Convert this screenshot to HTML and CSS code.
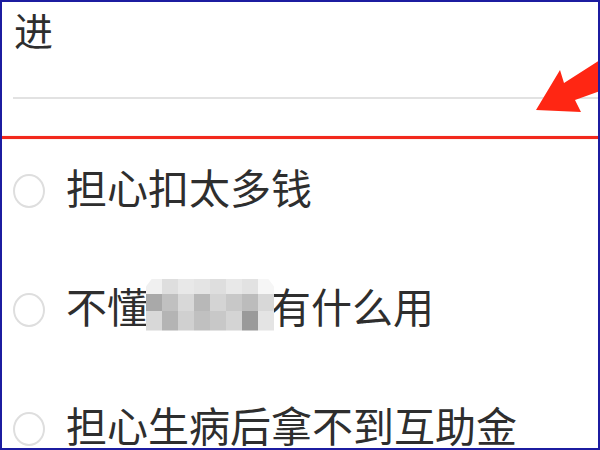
FILE: index.html
```html
<!DOCTYPE html>
<html lang="zh-CN">
<head>
<meta charset="utf-8">
<title>问卷</title>
<link rel="stylesheet" href="styles.css">
</head>
<body>
<div class="frame">
  <div class="title">进</div>
  <div class="divider-gray"></div>
  <div class="divider-red"></div>
  <ul class="options">
    <li class="option"><span class="radio"></span><span class="label">担心扣太多钱</span></li>
    <li class="option"><span class="radio"></span><span class="label">不懂<span class="mosaic">
      <i class="m1"></i><i class="m2"></i><i class="m3"></i><i class="m4"></i><i class="m5"></i><i class="m6"></i><i class="m7"></i><i class="m8"></i>
      <i class="m9"></i><i class="m10"></i><i class="m11"></i><i class="m12"></i><i class="m13"></i><i class="m14"></i><i class="m15"></i><i class="m16"></i>
      <i class="m17"></i><i class="m18"></i><i class="m19"></i><i class="m20"></i><i class="m21"></i><i class="m22"></i><i class="m23"></i><i class="m24"></i>
    </span>有什么用</span></li>
    <li class="option"><span class="radio"></span><span class="label">担心生病后拿不到互助金</span></li>
  </ul>
  <svg class="arrow" width="72" height="62" viewBox="530 53 72 62" aria-hidden="true">
    <polygon points="536,110 560,70 564,83 600,60 600,91 575,100 581,112" fill="#ff2613"/>
  </svg>
</div>
</body>
</html>
```

FILE: styles.css
```css
* { box-sizing: border-box; }
html, body { margin: 0; padding: 0; background: #fff; }
.frame {
  position: relative;
  width: 600px;
  height: 450px;
  border: 2px solid #1c1ca0;
  overflow: hidden;
  background: #fff;
  font-family: "Noto Sans CJK SC", "Noto Sans", sans-serif;
  color: #2e2e2e;
}
.title {
  font-size: 39px;
  line-height: 40px;
  height: 40px;
  margin: 7px 0 0 12px;
}
.divider-gray {
  height: 2px;
  background: #e2e2e2;
  margin: 48px 0 0 11px;
}
.divider-red {
  height: 3px;
  background: #f2281c;
  box-shadow: 0 0 1px rgba(242, 40, 28, 0.6);
  margin-top: 37px;
}
.options {
  list-style: none;
  margin: 0;
  padding: 27px 0 0 11px;
  display: flex;
  flex-direction: column;
  gap: 78px;
}
.option {
  display: flex;
  align-items: center;
  height: 41px;
}
.radio {
  width: 32px;
  height: 34px;
  border: 2px solid #dedede;
  border-radius: 50%;
  flex: none;
  margin-top: 8px;
}
.label {
  display: flex;
  align-items: center;
  font-size: 41px;
  line-height: 41px;
  margin-left: 21px;
  white-space: nowrap;
}
.mosaic {
  display: grid;
  grid-template-columns: repeat(8, 16px);
  grid-template-rows: 15px 17px 20px;
  width: 128px;
  height: 52px;
  margin: -2px -4px 0 -2px;
  clip-path: polygon(6px 0, 122px 0, 128px 8px, 128px 52px, 0 52px, 0 8px);
}
.mosaic i { display: block; }
.m1 { background: #f0f0f0; } .m2 { background: #dedede; } .m3 { background: #e8e8e8; } .m4 { background: #e4e4e4; }
.m5 { background: #dedede; } .m6 { background: #e8e8e8; } .m7 { background: #e2e2e2; } .m8 { background: #f6f6f6; }
.m9 { background: #a9a9a9; } .m10 { background: #c0c0c0; } .m11 { background: #d8d8d8; } .m12 { background: #b8b8b8; }
.m13 { background: #d4d4d4; } .m14 { background: #c8c8c8; } .m15 { background: #bcbcbc; } .m16 { background: #d8d8d8; }
.m17 { background: #d8d8d8; } .m18 { background: #b4b4b4; } .m19 { background: #d0d0d0; } .m20 { background: #c0c0c0; }
.m21 { background: #c8c8c8; } .m22 { background: #d4d4d4; } .m23 { background: #9a9a9a; } .m24 { background: #e4e4e4; }
.arrow {
  position: absolute;
  left: 528px;
  top: 51px;
}
```
